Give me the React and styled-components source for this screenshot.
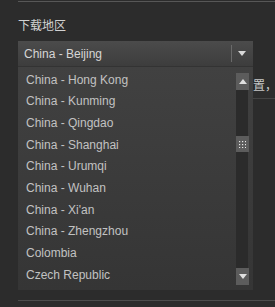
import React from "react";
import styled, { createGlobalStyle } from "styled-components";

const Global = createGlobalStyle`
  html, body { margin: 0; padding: 0; background: #2c2c2c; }
  body { width: 275px; height: 307px; overflow: hidden; }
`;

const Page = styled.div`
  padding-left: 18px;
  font-family: "Liberation Sans", "Noto Sans CJK SC", sans-serif;
  color: #d0d0d0;
  height: 307px;
  box-sizing: border-box;
  display: flex;
  flex-direction: column;
`;

const Rule = styled.div`
  height: 1px;
  background: ${(p) => p.$color || "#555"};
  margin-top: ${(p) => p.$top || 0}px;
  flex: none;
`;

const Label = styled.div`
  margin-top: 14px;
  font-family: "Noto Sans CJK SC", sans-serif;
  font-size: 12px;
  line-height: 18px;
  color: #d2d2d2;
`;

const Field = styled.div`
  position: relative;
  margin-top: 7px;
  width: 235px;
`;

const SelectBox = styled.div`
  height: 25px;
  display: flex;
  align-items: center;
  background: linear-gradient(#4b4b4b, #3d3d3d);
  box-sizing: border-box;
`;

const SelectText = styled.span`
  flex: 1;
  padding-left: 6px;
  font-size: 12px;
  color: #d6d6d6;
  line-height: 25px;
  padding-top: 1px;
`;

const Divider = styled.span`
  width: 1px;
  height: 17px;
  background: #6a6a6a;
  margin-right: 6px;
`;

const ArrowWrap = styled.span`
  width: 8px;
  margin-right: 7px;
  display: flex;
  justify-content: center;
`;

const Menu = styled.div`
  position: absolute;
  top: 25px;
  left: 0;
  width: 235px;
  height: 224px;
  box-sizing: border-box;
  padding-top: 2.5px;
  background: linear-gradient(#414141, #353535);
  border-top: 1px solid #333;
  z-index: 2;
`;

const Item = styled.div`
  height: 21.7px;
  line-height: 21.7px;
  padding-left: 8px;
  font-size: 12px;
  color: #c2c2c2;
  white-space: nowrap;
`;

const Scroll = styled.div`
  position: absolute;
  right: 4px;
  top: 6px;
  bottom: 5px;
  width: 13px;
  display: flex;
  flex-direction: column;
`;

const ScrollBtn = styled.div`
  height: 17px;
  background: #5c5c5c;
  display: flex;
  align-items: center;
  justify-content: center;
  flex: none;
`;

const Track = styled.div`
  flex: 1;
  background: #2b2b2b;
  margin-right: 1px;
  position: relative;
`;

const Thumb = styled.div`
  position: absolute;
  left: 0;
  right: -1px;
  top: 46px;
  height: 16px;
  background: #5c5c5c;
  display: flex;
  align-items: center;
  justify-content: center;
`;

const Para = styled.div`
  margin-top: 10px;
  font-family: "Noto Sans CJK SC", sans-serif;
  font-size: 12px;
  line-height: 18px;
  color: #c8c8c8;
  white-space: nowrap;
  overflow: hidden;
  text-indent: 7px;
`;

const Spacer = styled.div`
  flex: 1;
`;

const Tri = ({ up, color = "#e0e0e0" }) => (
  <svg width="8" height="5" viewBox="0 0 8 5">
    <path d={up ? "M0 5 L4 0 L8 5 Z" : "M0 0 L8 0 L4 5 Z"} fill={color} />
  </svg>
);

const Dots = () => (
  <svg width="7" height="7" viewBox="0 0 7 7">
    {[0, 3, 6].map((y) =>
      [0, 3, 6].map((x) => (
        <rect key={`${x}-${y}`} x={x} y={y} width="1.2" height="1.2" fill="#e8e8e8" />
      ))
    )}
  </svg>
);

const items = [
  "China - Hong Kong",
  "China - Kunming",
  "China - Qingdao",
  "China - Shanghai",
  "China - Urumqi",
  "China - Wuhan",
  "China - Xi'an",
  "China - Zhengzhou",
  "Colombia",
  "Czech Republic",
];

export default function App() {
  return (
    <>
      <Global />
      <Page>
        <Rule $top={1} $color="#575757" />
        <Label>下载地区</Label>
        <Field>
          <SelectBox>
            <SelectText>China - Beijing</SelectText>
            <Divider />
            <ArrowWrap>
              <Tri color="#d8d8d8" />
            </ArrowWrap>
          </SelectBox>
          <Menu>
            {items.map((t) => (
              <Item key={t}>{t}</Item>
            ))}
            <Scroll>
              <ScrollBtn>
                <Tri up />
              </ScrollBtn>
              <Track>
                <Thumb>
                  <Dots />
                </Thumb>
              </Track>
              <ScrollBtn>
                <Tri />
              </ScrollBtn>
            </Scroll>
          </Menu>
        </Field>
        <Para>请选择离您最近的下载服务器地区并保存设置，但</Para>
        <Rule $top={4} $color="#444" />
        <Spacer />
        <Rule $color="#4d4d4d" />
        <Rule $top={5} $color="#2c2c2c" />
      </Page>
    </>
  );
}
